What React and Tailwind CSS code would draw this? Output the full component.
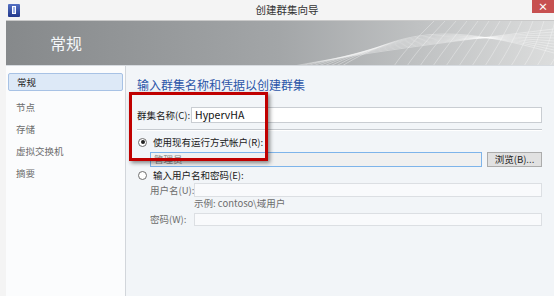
import React from "react";

const font = { fontFamily: '"Noto Sans CJK SC", "Noto Sans", sans-serif' };

const HeaderWave = () => (
  <svg className="absolute right-0 top-0" width="300" height="45" viewBox="0 0 300 45" fill="none">
    {[0, 1, 2, 3, 4, 5, 6, 7, 8].map((i) => (
      <path
        key={"h" + i}
        d={`M${40 + i * 6} 45 C ${120 + i * 4} ${30 - i * 3}, ${200} ${20 - i * 2}, 300 ${8 + i * 3}`}
        stroke="#ffffff"
        strokeOpacity="0.45"
        strokeWidth="0.8"
      />
    ))}
    {[0, 1, 2, 3, 4, 5, 6, 7, 8, 9, 10, 11, 12, 13].map((i) => (
      <path
        key={"v" + i}
        d={`M${140 + i * 13} 45 C ${150 + i * 13} 30, ${165 + i * 12} 15, ${180 + i * 11} 0`}
        stroke="#ffffff"
        strokeOpacity="0.4"
        strokeWidth="0.8"
      />
    ))}
  </svg>
);

const Radio = ({ checked }) => (
  <span className="flex h-[9px] w-[9px] shrink-0 items-center justify-center rounded-full border border-[#6f6f6f] bg-white">
    {checked && <span className="h-[4px] w-[4px] rounded-full bg-[#222]" />}
  </span>
);

const NavItem = ({ children, active }) =>
  active ? (
    <div className="mx-[2px] flex h-[18px] items-center rounded-[2px] border border-[#a7c2e5] bg-[#dde9f7] pl-[8px] text-[#222]">
      {children}
    </div>
  ) : (
    <div className="flex h-[22px] items-center pl-[10px] text-[#6d6d6d]">{children}</div>
  );

export default function App() {
  return (
    <div style={font} className="flex h-[296px] w-[554px] flex-col overflow-hidden whitespace-nowrap bg-[#f4f4f4] text-[9.5px]">
      {/* title bar */}
      <div className="relative flex h-[20px] shrink-0 items-center">
        <div className="ml-[8px] flex h-[13px] w-[12px] items-center justify-center rounded-[1px] bg-gradient-to-b from-[#5470c2] to-[#23388c]">
          <span className="h-[8px] w-[4px] border border-white bg-[#9fb2e8]" />
        </div>
        <div className="flex-1 text-center text-[10.5px] text-[#333]">创建群集向导</div>
        <div className="absolute right-0 top-0 flex h-[13px] w-[22px] items-center justify-center bg-[#c75050] text-[10px] font-bold leading-none text-white">
          ×
        </div>
      </div>

      <div className="flex min-h-0 flex-1 flex-col pl-[6px]">
        {/* header band */}
        <div className="relative h-[45px] shrink-0 overflow-hidden border-t border-[#c9c9c9] bg-gradient-to-r from-[#86898b] via-[#a3a6a8] to-[#dcdddd]">
          <HeaderWave />
          <div className="relative ml-[44px] mt-[11px] text-[16px] leading-[22px] text-[#f4f6f8]">常规</div>
        </div>

        <div className="flex min-h-0 flex-1 border-t border-[#d7dbe0]">
          {/* nav */}
          <div className="flex w-[120px] shrink-0 flex-col border-r border-[#d2d6db] bg-[#fbfcfd] pt-[7px]">
            <NavItem active>常规</NavItem>
            <div className="mt-[5px] flex flex-col">
              <NavItem>节点</NavItem>
              <NavItem>存储</NavItem>
              <NavItem>虚拟交换机</NavItem>
              <NavItem>摘要</NavItem>
            </div>
          </div>

          {/* content */}
          <div className="relative flex-1 bg-[#f2f5f8] pl-[11px] pr-[12px] pt-[10px]">
            <div className="h-[18px] text-[12px] leading-[18px] text-[#2c56a8]">输入群集名称和凭据以创建群集</div>

            <div className="mt-[13px] flex h-[16px] items-center">
              <span className="w-[54px] shrink-0 text-[#1a1a1a]">群集名称(C):</span>
              <div className="flex h-[16px] flex-1 items-center border border-[#c9cdd2] bg-white pl-[3px] text-[10.5px] text-[#111]">
                HypervHA
              </div>
            </div>

            <div className="mt-[6px] h-[2px] border-t border-[#c6cacf] bg-white" />

            <div className="mt-[4px] flex h-[14px] items-center gap-[6px] pl-[1px] text-[#1a1a1a]">
              <Radio checked />
              <span>使用现有运行方式帐户(R):</span>
            </div>
            <div className="mt-[3px] flex h-[15px] items-center pl-[13px]">
              <div className="flex h-[15px] flex-1 items-center border border-[#7eb4ea] bg-[#f0f0f0] pl-[3px] text-[#8a8a8a]">
                管理员
              </div>
              <div className="ml-[5px] flex h-[15px] w-[55px] shrink-0 items-center justify-center border border-[#acacac] bg-[#e1e1e1] text-[#222]">
                浏览(B)...
              </div>
            </div>

            <div className="mt-[1px] flex h-[14px] items-center gap-[6px] pl-[1px] text-[#1a1a1a]">
              <Radio />
              <span>输入用户名和密码(E):</span>
            </div>
            <div className="mt-[1px] flex h-[14px] items-center pl-[13px]">
              <span className="w-[44px] shrink-0 text-[#6d6d6d]">用户名(U):</span>
              <div className="h-[14px] flex-1 border border-[#dcdfe3] bg-[#f9fafc]" />
            </div>
            <div className="h-[13px] pl-[57px] leading-[13px] text-[#6d6d6d]">示例: contoso\域用户</div>
            <div className="mt-[3px] flex h-[13px] items-center pl-[13px]">
              <span className="w-[44px] shrink-0 text-[#6d6d6d]">密码(W):</span>
              <div className="h-[13px] flex-1 border border-[#dcdfe3] bg-[#f9fafc]" />
            </div>

            {/* annotation box */}
            <div className="absolute left-[3px] top-[26px] h-[69px] w-[139px] border-[3px] border-[#c00000] shadow-[2px_2px_4px_rgba(0,0,0,0.45)]" />
          </div>
        </div>
      </div>
    </div>
  );
}
